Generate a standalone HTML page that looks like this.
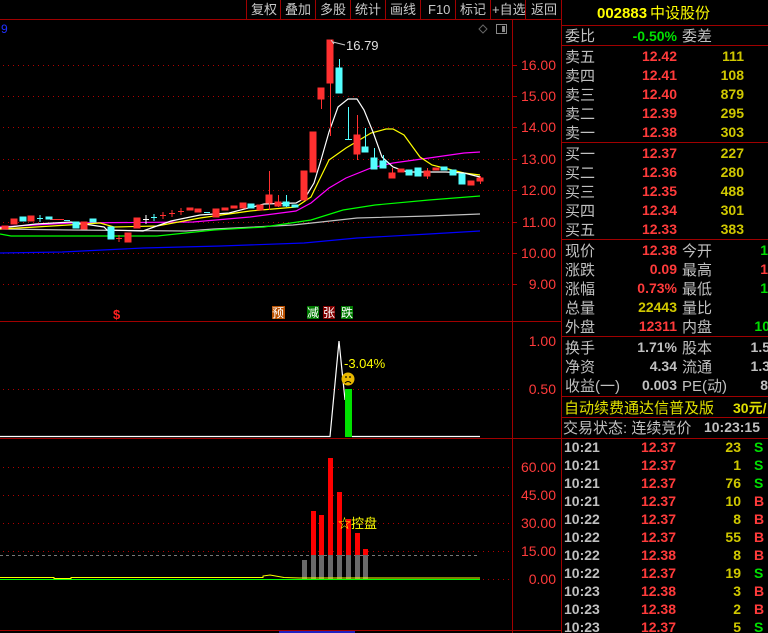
<!DOCTYPE html>
<html><head><meta charset="utf-8"><style>
html,body{margin:0;padding:0;background:#000;width:768px;height:633px;overflow:hidden}
svg{display:block}
text{font-family:"Liberation Sans","Noto Sans CJK SC",sans-serif}
.cn{font-size:15px;fill:#c0c0c0}
.n{font-size:14px}
.ax{font-size:14px;fill:#ff3b3b}
</style></head><body>
<svg width="768" height="633" viewBox="0 0 768 633" xmlns="http://www.w3.org/2000/svg">
<!-- toolbar -->
<g stroke="#a00000" stroke-width="1">
<line x1="0" y1="19.5" x2="562" y2="19.5"/>
<line x1="246.5" y1="0" x2="246.5" y2="19"/><line x1="280.5" y1="0" x2="280.5" y2="19"/><line x1="315.5" y1="0" x2="315.5" y2="19"/><line x1="350.5" y1="0" x2="350.5" y2="19"/><line x1="385.5" y1="0" x2="385.5" y2="19"/><line x1="420.5" y1="0" x2="420.5" y2="19"/><line x1="455.5" y1="0" x2="455.5" y2="19"/><line x1="490.5" y1="0" x2="490.5" y2="19"/><line x1="525.5" y1="0" x2="525.5" y2="19"/>
<line x1="512.5" y1="19" x2="512.5" y2="633"/>
<line x1="0" y1="321.5" x2="562" y2="321.5"/>
<line x1="0" y1="438.5" x2="562" y2="438.5"/>
<line x1="0" y1="630.5" x2="562" y2="630.5"/>
<line x1="561.5" y1="0" x2="561.5" y2="633"/>
</g>
<g font-size="13" fill="#c8c8c8" font-family="Liberation Sans,Noto Sans CJK SC,sans-serif">
<text x="251" y="14">复权</text><text x="285" y="14">叠加</text><text x="320" y="14">多股</text><text x="355" y="14">统计</text><text x="390" y="14">画线</text><text x="428" y="14">F10</text><text x="460" y="14">标记</text><text x="492" y="14">+自选</text><text x="531" y="14">返回</text>
</g>
<text x="1" y="33" font-size="12" fill="#2030ff">9</text>
<path d="M483 25 L487 29 L483 33 L479 29Z" fill="none" stroke="#666"/>
<rect x="496.5" y="24.5" width="10" height="9" fill="none" stroke="#888"/><rect x="502" y="26" width="3" height="6" fill="#888"/>
<!-- grid -->
<g stroke="#b00000" stroke-dasharray="1 4">
<line x1="3" y1="65.5" x2="512" y2="65.5"/><line x1="3" y1="96.5" x2="512" y2="96.5"/><line x1="3" y1="127.5" x2="512" y2="127.5"/><line x1="3" y1="159.5" x2="512" y2="159.5"/><line x1="3" y1="190.5" x2="512" y2="190.5"/><line x1="3" y1="222.5" x2="512" y2="222.5"/><line x1="3" y1="253.5" x2="512" y2="253.5"/><line x1="3" y1="284.5" x2="512" y2="284.5"/>
<line x1="3" y1="389.5" x2="512" y2="389.5"/>
<line x1="3" y1="467.5" x2="512" y2="467.5"/><line x1="3" y1="495.5" x2="512" y2="495.5"/><line x1="3" y1="523.5" x2="512" y2="523.5"/><line x1="3" y1="551.5" x2="512" y2="551.5"/><line x1="3" y1="579.5" x2="512" y2="579.5"/>
</g>
<g class="ax" text-anchor="end" font-size="14" fill="#ff3b3b">
<text x="556" y="70">16.00</text><text x="556" y="101">15.00</text><text x="556" y="132">14.00</text><text x="556" y="164">13.00</text><text x="556" y="195">12.00</text><text x="556" y="227">11.00</text><text x="556" y="258">10.00</text><text x="556" y="289">9.00</text>
<text x="556" y="346">1.00</text><text x="556" y="394">0.50</text>
<text x="556" y="472">60.00</text><text x="556" y="500">45.00</text><text x="556" y="528">30.00</text><text x="556" y="556">15.00</text><text x="556" y="584">0.00</text>
</g>
<g stroke="#b00000"><line x1="512" y1="65.5" x2="517" y2="65.5"/><line x1="512" y1="96.5" x2="517" y2="96.5"/><line x1="512" y1="127.5" x2="517" y2="127.5"/><line x1="512" y1="159.5" x2="517" y2="159.5"/><line x1="512" y1="190.5" x2="517" y2="190.5"/><line x1="512" y1="222.5" x2="517" y2="222.5"/><line x1="512" y1="253.5" x2="517" y2="253.5"/><line x1="512" y1="284.5" x2="517" y2="284.5"/></g>
<!-- MA lines -->
<g fill="none" stroke-width="1.2">
<polyline stroke="#0000ff" points="0,253 62,252 143,248 221,246 304,243 357,238 429,234 480,231"/>
<polyline stroke="#c0c0c0" points="0,229 71,230 186,231 214,229 293,225 321,222 357,218 429,216 480,214"/>
<polyline stroke="#00ff00" points="0,234 11,236 157,236 214,230 264,227 311,220 343,210 375,205 429,200 480,196"/>
<polyline stroke="#ff00ff" points="0,227 71,223 193,222 250,217 296,211 311,203 329,188 346,178 371,168 393,163 429,158 464,153 480,152"/>
<polyline stroke="#ffff00" points="0,229 36,227 100,223 114,227 157,226 200,218 250,211 296,207 311,197 329,160 346,148 371,133 386,129 393,129 404,135 420,157 432,165 464,173 480,175"/>
<polyline stroke="#ffffff" points="0,228 36,224 71,222 104,227 107,230 143,231 154,227 171,221 200,215 229,213 264,204 296,203 305,198 314,183 321,160 329,132 338,107 348,99 357,99 364,110 373,132 382,157 393,167 407,172 446,172 464,173 480,177"/>
</g>
<!-- candles -->
<g fill="#ff3030" stroke="#ff3030">
<rect x="2" y="226" width="6" height="3"/><rect x="11" y="219" width="6" height="5"/><rect x="28" y="216" width="6" height="5"/>
<line x1="50" y1="219.5" x2="64" y2="219.5"/><rect x="81" y="222" width="6" height="7"/>
<line x1="116" y1="238.5" x2="122" y2="238.5"/><line x1="119" y1="235" x2="119" y2="242"/>
<rect x="125" y="233" width="6" height="9"/><rect x="134" y="218" width="6" height="10"/>
<line x1="160" y1="215.5" x2="166" y2="215.5"/><line x1="163" y1="212" x2="163" y2="219"/>
<line x1="169" y1="213.5" x2="175" y2="213.5"/><line x1="172" y1="210" x2="172" y2="217"/>
<line x1="178" y1="211.5" x2="184" y2="211.5"/><line x1="181" y1="208" x2="181" y2="215"/>
<rect x="187" y="208" width="6" height="2"/><rect x="195" y="209" width="6" height="3"/>
<rect x="213" y="209" width="6" height="8"/><rect x="222" y="208" width="6" height="2"/><rect x="231" y="206" width="6" height="2"/><rect x="240" y="203" width="6" height="5"/>
<rect x="257" y="205" width="6" height="5"/>
<line x1="269.5" y1="171" x2="269.5" y2="210"/><rect x="266" y="195" width="6" height="8"/>
<line x1="278.5" y1="195" x2="278.5" y2="207"/><rect x="275" y="202" width="6" height="4"/>
<rect x="301" y="171" width="6" height="29"/><rect x="310" y="132" width="6" height="40"/>
<line x1="321.5" y1="88" x2="321.5" y2="109"/><rect x="318" y="88" width="6" height="11"/>
<line x1="330.5" y1="40" x2="330.5" y2="136"/><rect x="327" y="40" width="6" height="43"/>
<line x1="357.5" y1="115" x2="357.5" y2="160"/><rect x="354" y="135" width="6" height="19"/>
<line x1="392.5" y1="168" x2="392.5" y2="178"/><rect x="389" y="173" width="6" height="5"/>
<rect x="398" y="169" width="6" height="3"/>
<line x1="427.5" y1="168" x2="427.5" y2="179"/><rect x="424" y="171" width="6" height="5"/>
<rect x="433" y="168" width="6" height="2"/>
<rect x="468" y="181" width="6" height="4"/><line x1="480.5" y1="176" x2="480.5" y2="184"/><rect x="477" y="178" width="6" height="3"/>
</g>
<g fill="#54ffff" stroke="#54ffff">
<rect x="20" y="217" width="6" height="4"/><line x1="37" y1="218.5" x2="43" y2="218.5"/><line x1="40" y1="215" x2="40" y2="222"/>
<rect x="46" y="217" width="6" height="2"/><line x1="64" y1="220.5" x2="70" y2="220.5"/>
<rect x="73" y="222" width="6" height="6"/><rect x="90" y="219" width="6" height="3"/>
<rect x="108" y="227" width="6" height="12"/>
<line x1="151" y1="217.5" x2="157" y2="217.5"/><line x1="154" y1="214" x2="154" y2="221"/>
<line x1="204" y1="212.5" x2="210" y2="212.5"/><rect x="248" y="204" width="6" height="4"/>
<line x1="286.5" y1="195" x2="286.5" y2="207"/><rect x="283" y="202" width="6" height="4"/><rect x="292" y="205" width="6" height="2"/>
<line x1="339.5" y1="59" x2="339.5" y2="93"/><rect x="336" y="68" width="6" height="25"/>
<line x1="348.5" y1="107" x2="348.5" y2="139"/><line x1="345" y1="139.5" x2="352" y2="139.5"/>
<line x1="365.5" y1="128" x2="365.5" y2="152"/><rect x="362" y="147" width="6" height="5"/>
<line x1="374.5" y1="148" x2="374.5" y2="169"/><rect x="371" y="158" width="6" height="11"/>
<line x1="383.5" y1="155" x2="383.5" y2="168"/><rect x="380" y="161" width="6" height="7"/>
<rect x="406" y="170" width="6" height="5"/><rect x="415" y="168" width="6" height="8"/>
<rect x="441" y="167" width="6" height="3"/><rect x="450" y="170" width="6" height="5"/>
<rect x="459" y="174" width="6" height="10"/>
</g>
<g stroke="#fff"><line x1="143" y1="219.5" x2="149" y2="219.5"/><line x1="146" y1="215" x2="146" y2="224"/></g>
<path d="M331 40 L334 44 M333 42 L345 45" stroke="#ccc" fill="none"/>
<text x="346" y="50" font-size="13" fill="#e0e0e0">16.79</text>
<text x="113" y="319" font-size="13" fill="#ff2020" font-weight="bold">$</text>
<rect x="272" y="306" width="13" height="13" fill="#b85000"/><text x="272" y="317" font-size="12" fill="#fff">预</text>
<rect x="307" y="306" width="12" height="13" fill="#007a00"/><text x="307" y="317" font-size="12" fill="#fff">减</text>
<rect x="323" y="306" width="12" height="13" fill="#800000"/><text x="323" y="317" font-size="12" fill="#fff">张</text>
<rect x="341" y="306" width="12" height="13" fill="#007a00"/><text x="341" y="317" font-size="12" fill="#fff">跌</text>
<!-- panel 2 -->
<polyline fill="none" stroke="#fff" stroke-width="1.2" points="0,436.5 330,436.5 339,341 345,400"/>
<line x1="352" y1="436.5" x2="480" y2="436.5" stroke="#fff" stroke-width="1.2"/>
<rect x="345" y="389" width="7" height="48" fill="#00e000"/>
<circle cx="348" cy="379" r="6.5" fill="#e8b800"/>
<circle cx="346" cy="377" r="0.9" fill="#000"/><circle cx="350" cy="377" r="0.9" fill="#000"/>
<path d="M345 383 Q348 380 351 383" stroke="#000" fill="none"/>
<text x="344" y="368" font-size="13" fill="#ffff00">-3.04%</text>
<!-- panel 3 -->
<line x1="0" y1="555.5" x2="480" y2="555.5" stroke="#777" stroke-dasharray="3 3"/>
<g fill="#ff0000"><rect x="311" y="511" width="5" height="44"/><rect x="319" y="515" width="5" height="40"/><rect x="328" y="458" width="5" height="97"/><rect x="337" y="492" width="5" height="63"/><rect x="346" y="519" width="5" height="36"/><rect x="355" y="533" width="5" height="22"/><rect x="363" y="549" width="5" height="6"/></g>
<g fill="#6a6a6a"><rect x="302" y="560" width="5" height="19"/><rect x="311" y="555" width="5" height="24"/><rect x="319" y="555" width="5" height="24"/><rect x="328" y="555" width="5" height="24"/><rect x="337" y="555" width="5" height="24"/><rect x="346" y="555" width="5" height="24"/><rect x="355" y="555" width="5" height="24"/><rect x="363" y="555" width="5" height="24"/></g>
<polyline fill="none" stroke="#ffff00" points="0,577.5 54,577.5 54,578.5 71,578.5 71,577.5 263,577.5 263,576 270,575 284,577.5 300,578 480,578"/>
<line x1="0" y1="579.5" x2="480" y2="579.5" stroke="#00ff00"/>
<text x="338" y="528" font-size="13" fill="#ffff00">☆控盘</text>
<rect x="279" y="631" width="76" height="2" fill="#2020c0"/>
<!-- right panel lines -->
<g stroke="#a00000"><line x1="562" y1="25.5" x2="768" y2="25.5"/><line x1="562" y1="45.5" x2="768" y2="45.5"/><line x1="562" y1="142.5" x2="768" y2="142.5"/><line x1="562" y1="239.5" x2="768" y2="239.5"/><line x1="562" y1="336.5" x2="768" y2="336.5"/><line x1="562" y1="396.5" x2="768" y2="396.5"/><line x1="562" y1="417.5" x2="768" y2="417.5"/><line x1="562" y1="438.5" x2="768" y2="438.5"/></g>
<text x="597" y="18" font-size="15" fill="#ffff00" font-weight="bold">002883</text><text x="650" y="18" font-size="15" fill="#ffff00">中设股份</text>
<g font-size="15" fill="#c0c0c0">
<text x="565" y="41">委比</text><text x="682" y="41">委差</text>
<text x="565" y="62">卖五</text><text x="565" y="81">卖四</text><text x="565" y="100">卖三</text><text x="565" y="119">卖二</text><text x="565" y="138">卖一</text>
<text x="565" y="159">买一</text><text x="565" y="178">买二</text><text x="565" y="197">买三</text><text x="565" y="216">买四</text><text x="565" y="235">买五</text>
<text x="565" y="256">现价</text><text x="565" y="275">涨跌</text><text x="565" y="294">涨幅</text><text x="565" y="313">总量</text><text x="565" y="332">外盘</text>
<text x="682" y="256">今开</text><text x="682" y="275">最高</text><text x="682" y="294">最低</text><text x="682" y="313">量比</text><text x="682" y="332">内盘</text>
<text x="565" y="353">换手</text><text x="565" y="372">净资</text><text x="565" y="391">收益(一)</text>
<text x="682" y="353">股本</text><text x="682" y="372">流通</text><text x="682" y="391">PE(动)</text>
<text x="563" y="433">交易状态: 连续竞价</text>
</g>
<text x="564" y="413" font-size="15" fill="#e0e000">自动续费通达信普及版</text><text x="733" y="413" font-size="14" fill="#e0e000" font-weight="bold">30元/</text>
<g font-size="14" font-weight="bold" text-anchor="end">
<text x="677" y="41" fill="#00e000">-0.50%</text>
<g fill="#ff3b3b"><text x="677" y="61">12.42</text><text x="677" y="80">12.41</text><text x="677" y="99">12.40</text><text x="677" y="118">12.39</text><text x="677" y="137">12.38</text>
<text x="677" y="158">12.37</text><text x="677" y="177">12.36</text><text x="677" y="196">12.35</text><text x="677" y="215">12.34</text><text x="677" y="234">12.33</text>
<text x="677" y="255">12.38</text><text x="677" y="274">0.09</text><text x="677" y="293">0.73%</text><text x="677" y="331">12311</text><text x="768" y="274">1</text></g>
<g fill="#d0c800"><text x="744" y="61">111</text><text x="744" y="80">108</text><text x="744" y="99">879</text><text x="744" y="118">295</text><text x="744" y="137">303</text>
<text x="744" y="158">227</text><text x="744" y="177">280</text><text x="744" y="196">488</text><text x="744" y="215">301</text><text x="744" y="234">383</text><text x="677" y="312">22443</text></g>
<g fill="#00e000"><text x="768" y="255">1</text><text x="768" y="293">1</text><text x="770" y="331">10</text></g>
<g fill="#c0c0c0"><text x="677" y="352">1.71%</text><text x="677" y="371">4.34</text><text x="677" y="390">0.003</text><text x="770" y="352">1.5</text><text x="770" y="371">1.3</text><text x="768" y="390">8</text></g>
<text x="760" y="432" fill="#c0c0c0">10:23:15</text>
</g>
<!-- trades -->
<g font-size="14" font-weight="bold">
<g fill="#c0c0c0"><text x="564" y="452">10:21</text><text x="564" y="470">10:21</text><text x="564" y="488">10:21</text><text x="564" y="506">10:21</text><text x="564" y="524">10:22</text><text x="564" y="542">10:22</text><text x="564" y="560">10:22</text><text x="564" y="578">10:22</text><text x="564" y="596">10:23</text><text x="564" y="614">10:23</text><text x="564" y="632">10:23</text></g>
<g fill="#ff3b3b" text-anchor="end"><text x="676" y="452">12.37</text><text x="676" y="470">12.37</text><text x="676" y="488">12.37</text><text x="676" y="506">12.37</text><text x="676" y="524">12.37</text><text x="676" y="542">12.37</text><text x="676" y="560">12.38</text><text x="676" y="578">12.37</text><text x="676" y="596">12.38</text><text x="676" y="614">12.38</text><text x="676" y="632">12.37</text></g>
<g fill="#d0c800" text-anchor="end"><text x="741" y="452">23</text><text x="741" y="470">1</text><text x="741" y="488">76</text><text x="741" y="506">10</text><text x="741" y="524">8</text><text x="741" y="542">55</text><text x="741" y="560">8</text><text x="741" y="578">19</text><text x="741" y="596">3</text><text x="741" y="614">2</text><text x="741" y="632">5</text></g>
<g><text x="754" y="452" fill="#00e000">S</text><text x="754" y="470" fill="#00e000">S</text><text x="754" y="488" fill="#00e000">S</text><text x="754" y="506" fill="#ff3b3b">B</text><text x="754" y="524" fill="#ff3b3b">B</text><text x="754" y="542" fill="#ff3b3b">B</text><text x="754" y="560" fill="#ff3b3b">B</text><text x="754" y="578" fill="#00e000">S</text><text x="754" y="596" fill="#ff3b3b">B</text><text x="754" y="614" fill="#ff3b3b">B</text><text x="754" y="632" fill="#00e000">S</text></g>
</g>
</svg>
</body></html>
